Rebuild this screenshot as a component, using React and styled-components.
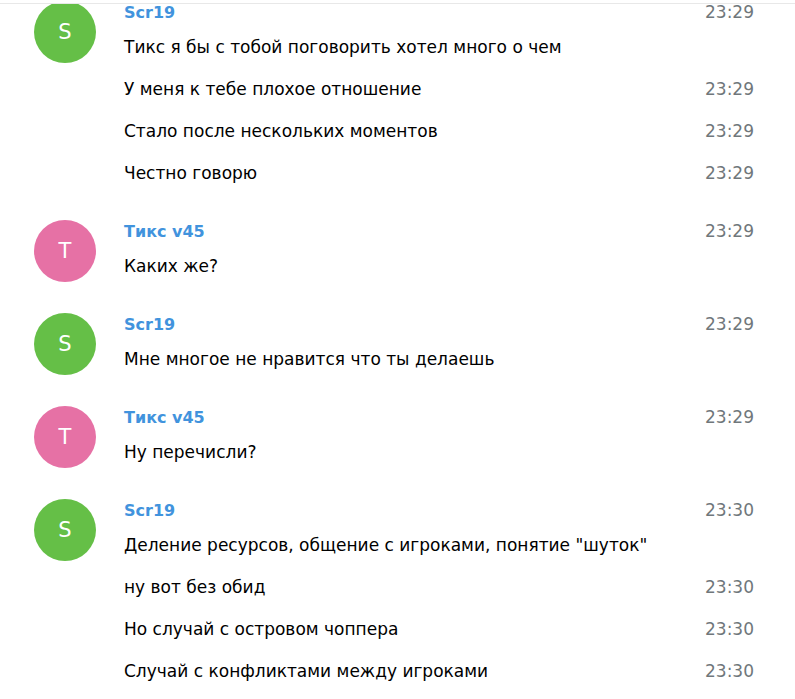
import styled, { createGlobalStyle } from 'styled-components';

const GlobalStyle = createGlobalStyle`
  html, body {
    margin: 0;
    padding: 0;
    background: #ffffff;
  }
  body {
    font-family: 'DejaVu Sans', Verdana, sans-serif;
    color: #000000;
  }
`;

const colors = {
  green: '#65bf47',
  pink: '#e671a5',
};

const Page = styled.div`
  padding-top: 3px;
  height: 699px;
  box-sizing: border-box;
`;

const History = styled.div`
  border-top: 1px solid #e8e8e8;
  height: 100%;
  overflow: hidden;
`;

const Feed = styled.div`
  margin-top: -6px;
  padding: 0 41px 0 34px;
  display: flex;
  flex-direction: column;
  gap: 23px;
`;

const Group = styled.div`
  display: grid;
  grid-template-columns: 62px 1fr;
  column-gap: 28px;
  align-items: start;
`;

const Userpic = styled.div`
  width: 62px;
  height: 62px;
  margin-top: 3px;
  border-radius: 50%;
  background: ${(p) => p.$color};
  color: #ffffff;
  font-size: 21px;
  display: flex;
  align-items: center;
  justify-content: center;
`;

const Body = styled.div`
  display: flex;
  flex-direction: column;
`;

const Row = styled.div`
  display: flex;
  align-items: center;
  justify-content: space-between;
  height: ${(p) => (p.$head ? '28px' : '42px')};
`;

const FromName = styled.span`
  color: #4193dd;
  font-weight: 700;
  font-size: 16px;
`;

const Text = styled.span`
  font-size: 17px;
`;

const Time = styled.span`
  color: #70777b;
  font-size: 17px;
`;

const messages = [
  {
    from: 'Scr19',
    letter: 'S',
    color: colors.green,
    time: '23:29',
    lines: [
      ['Тикс я бы с тобой поговорить хотел много о чем'],
      ['У меня к тебе плохое отношение', '23:29'],
      ['Стало после нескольких моментов', '23:29'],
      ['Честно говорю', '23:29'],
    ],
  },
  {
    from: 'Тикс v45',
    letter: 'T',
    color: colors.pink,
    time: '23:29',
    lines: [['Каких же?']],
  },
  {
    from: 'Scr19',
    letter: 'S',
    color: colors.green,
    time: '23:29',
    lines: [['Мне многое не нравится что ты делаешь']],
  },
  {
    from: 'Тикс v45',
    letter: 'T',
    color: colors.pink,
    time: '23:29',
    lines: [['Ну перечисли?']],
  },
  {
    from: 'Scr19',
    letter: 'S',
    color: colors.green,
    time: '23:30',
    lines: [
      ['Деление ресурсов, общение с игроками, понятие "шуток"'],
      ['ну вот без обид', '23:30'],
      ['Но случай с островом чоппера', '23:30'],
      ['Случай с конфликтами между игроками', '23:30'],
    ],
  },
];

export default function App() {
  return (
    <>
      <GlobalStyle />
      <Page>
        <History>
          <Feed>
            {messages.map((m, i) => (
              <Group key={i}>
                <Userpic $color={m.color}>{m.letter}</Userpic>
                <Body>
                  <Row $head>
                    <FromName>{m.from}</FromName>
                    <Time>{m.time}</Time>
                  </Row>
                  {m.lines.map(([text, time], j) => (
                    <Row key={j}>
                      <Text>{text}</Text>
                      {time && <Time>{time}</Time>}
                    </Row>
                  ))}
                </Body>
              </Group>
            ))}
          </Feed>
        </History>
      </Page>
    </>
  );
}
